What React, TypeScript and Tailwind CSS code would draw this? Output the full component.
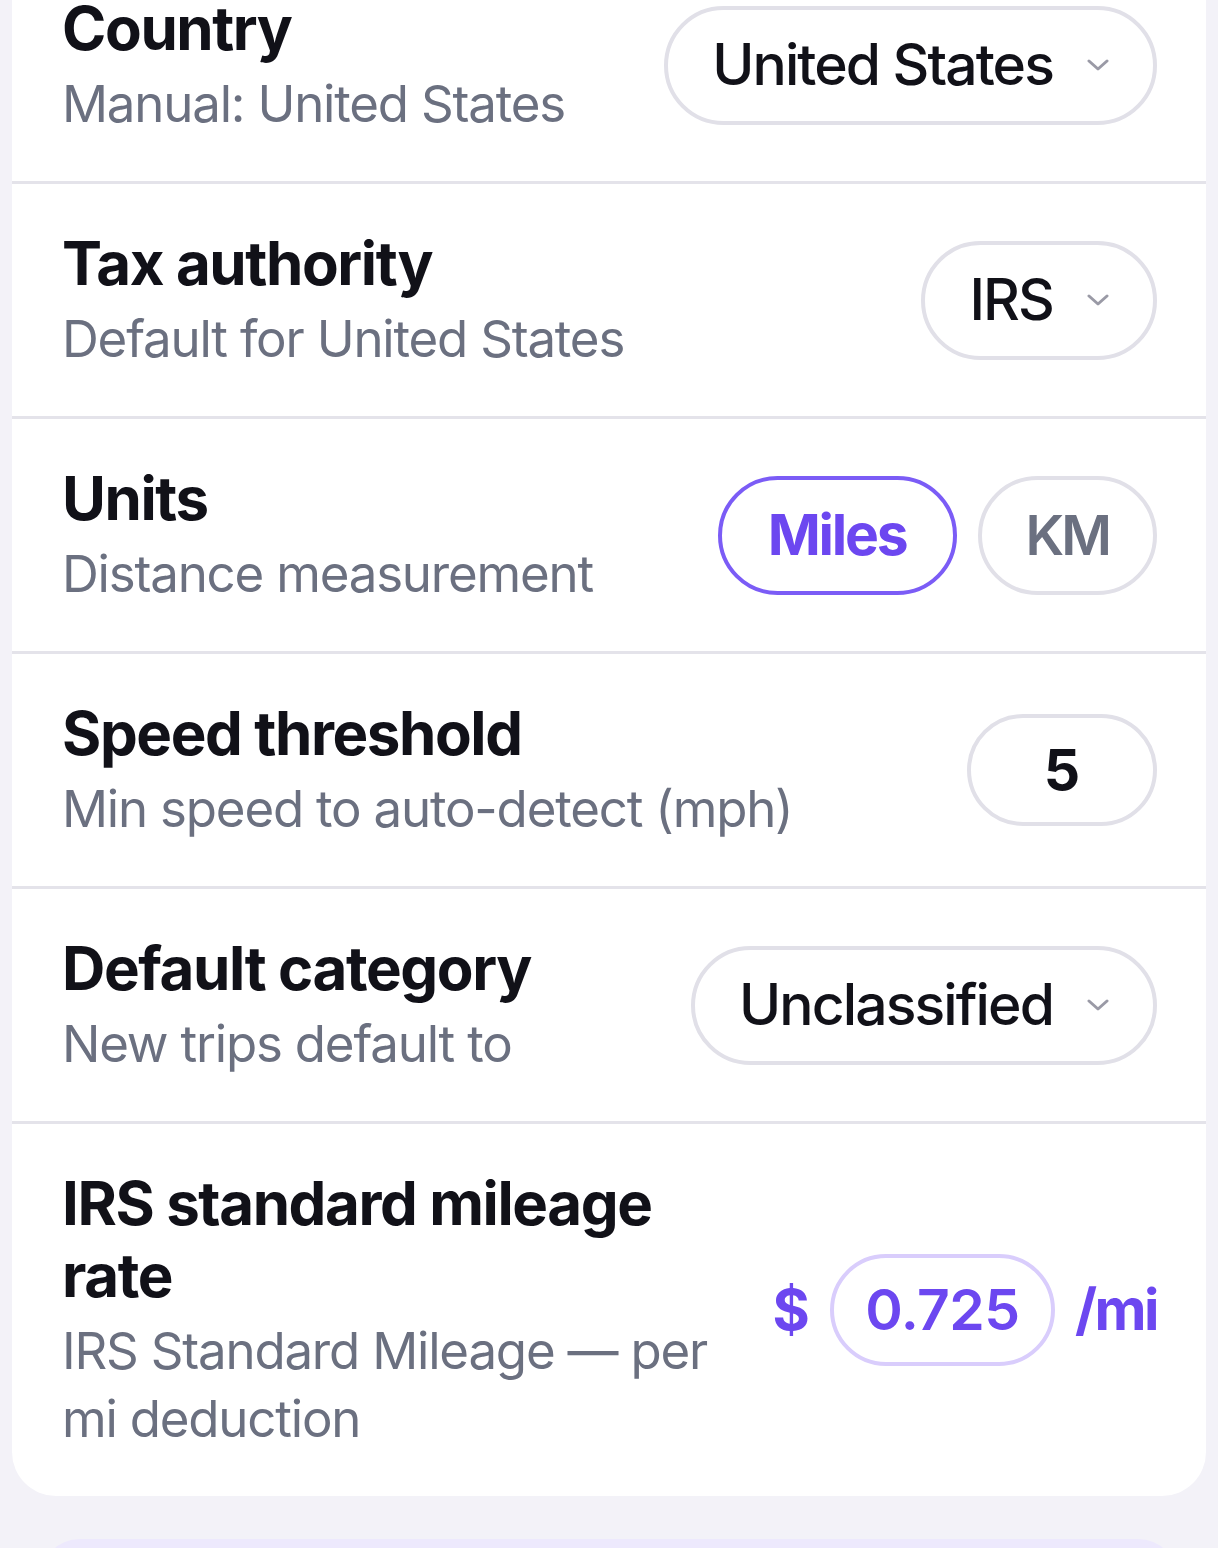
import React from "react";

const Chevron = () => (
  <svg width="22" height="12" viewBox="0 0 22 12" fill="none" className="shrink-0">
    <path d="M2 2 L11 10 L20 2" stroke="#9a9aa6" strokeWidth="3" strokeLinecap="round" strokeLinejoin="round" />
  </svg>
);

function Row({
  title,
  subtitle,
  children,
  last,
}: {
  title: React.ReactNode;
  subtitle: React.ReactNode;
  children: React.ReactNode;
  last?: boolean;
}) {
  return (
    <div className={last ? "" : "border-b-[3px] border-[#e4e3ea]"}>
      <div className="flex items-center justify-between gap-[40px] pl-[50px] pr-[49px] pt-[43px] pb-[43px]">
        <div className="min-w-0 flex-1">
          <div className="text-[60px] leading-[72px] font-bold text-[#111118] tracking-[-1.4px]">{title}</div>
          <div className="mt-[6px] text-[51px] leading-[68px] text-[#6b7080] tracking-[-1.2px]">{subtitle}</div>
        </div>
        <div className="flex shrink-0 items-center">{children}</div>
      </div>
    </div>
  );
}

function SelectPill({ label }: { label: string }) {
  return (
    <div className="flex h-[119px] items-center gap-[34px] rounded-full border-[4px] border-[#e1e0e8] bg-white pl-[44px] pr-[44px]">
      <span className="text-[57px] font-medium text-[#111118] tracking-[-1.9px]">{label}</span>
      <Chevron />
    </div>
  );
}

export default function App() {
  return (
    <div
      className="min-h-[1548px] overflow-hidden bg-[#f3f2f8] px-[12px]"
      style={{ fontFamily: "Inter, 'Noto Sans', sans-serif" }}
    >
      <div className="-mt-[51px] overflow-hidden rounded-[44px] bg-white">
        <Row title="Country" subtitle="Manual: United States">
          <SelectPill label="United States" />
        </Row>
        <Row title="Tax authority" subtitle="Default for United States">
          <SelectPill label="IRS" />
        </Row>
        <Row title="Units" subtitle="Distance measurement">
          <div className="flex items-center gap-[21px]">
            <div className="flex h-[119px] items-center rounded-full border-[4px] border-[#7b5cf6] bg-white px-[46px]">
              <span className="text-[57px] font-bold text-[#6c47f0] tracking-[-2.2px]">Miles</span>
            </div>
            <div className="flex h-[119px] items-center rounded-full border-[4px] border-[#e1e0e8] bg-white px-[44px]">
              <span className="text-[55px] font-semibold text-[#6b7080] tracking-[-3px]">KM</span>
            </div>
          </div>
        </Row>
        <Row title="Speed threshold" subtitle="Min speed to auto-detect (mph)">
          <div className="flex h-[112px] w-[190px] items-center justify-center rounded-full border-[4px] border-[#e1e0e8] bg-white">
            <span className="text-[57px] font-bold text-[#111118]">5</span>
          </div>
        </Row>
        <Row title="Default category" subtitle="New trips default to">
          <SelectPill label="Unclassified" />
        </Row>
        <Row
          last
          title="IRS standard mileage rate"
          subtitle="IRS Standard Mileage — per mi deduction"
        >
          <div className="flex items-center gap-[20px]">
            <span className="text-[57px] font-bold text-[#6c47f0]">$</span>
            <div className="flex h-[112px] w-[225px] items-center justify-center rounded-full border-[4px] border-[#d9cdfc] bg-white">
              <span className="text-[57px] font-semibold text-[#6c47f0] tracking-[-0.6px]">0.725</span>
            </div>
            <span className="text-[57px] font-bold text-[#6c47f0] tracking-[-2.5px]">/mi</span>
          </div>
        </Row>
      </div>
      <div className="mx-[28px] mt-[43px] h-[100px] rounded-[40px] bg-[#ede9fd]" />
    </div>
  );
}
